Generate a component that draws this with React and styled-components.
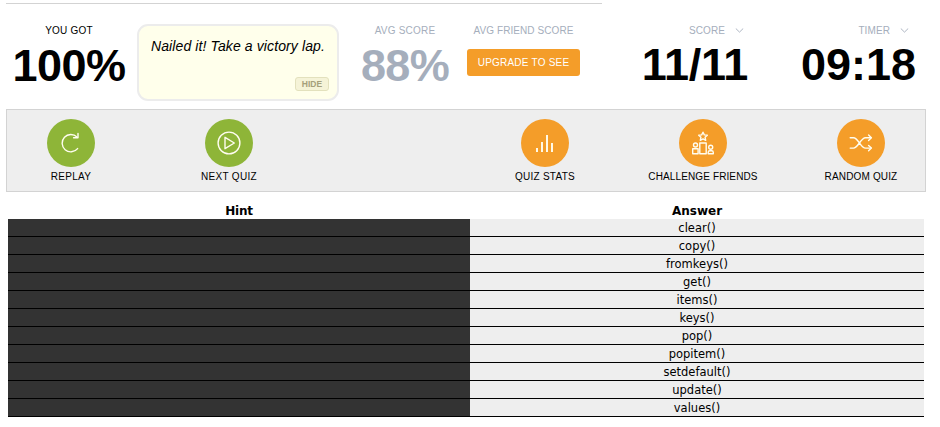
import React from "react";
import styled, { createGlobalStyle } from "styled-components";

const GlobalStyle = createGlobalStyle`
  * { box-sizing: border-box; }
  body {
    margin: 0;
    background: #fff;
    color: #000;
    font-family: "Liberation Sans", Arial, sans-serif;
  }
`;

const Page = styled.main`
  width: 940px;
  height: 427px;
  padding: 3px 14px 0 6px;
  overflow: hidden;
`;

const TopRule = styled.div`
  width: 596px;
  height: 1px;
  background: #d3d3d3;
`;

const ScoreBar = styled.header`
  display: flex;
  height: 105px;
  padding-top: 20px;
`;

const Stat = styled.section`
  display: flex;
  flex-direction: column;
  align-items: ${(p) => p.$align || "center"};
  width: ${(p) => p.$width}px;
  margin-left: ${(p) => p.$gap || 0}px;
  color: ${(p) => (p.$muted ? "#a5aebc" : "#000")};
`;

const StatLabel = styled.div`
  display: flex;
  align-items: center;
  height: 13px;
  font-size: 10px;
  line-height: 13px;
  letter-spacing: ${(p) => p.$spacing || 0}px;
  white-space: nowrap;
  color: ${(p) => p.$color || "inherit"};
  padding-right: ${(p) => p.$inset || 0}px;
  svg { margin-left: 10px; }
`;

const StatValue = styled.div`
  margin-top: ${(p) => p.$top}px;
  font-size: 45px;
  font-weight: bold;
  line-height: 52px;
  letter-spacing: ${(p) => p.$spacing || 0}px;
  white-space: nowrap;
`;

const Note = styled.aside`
  display: flex;
  flex-direction: column;
  justify-content: space-between;
  align-items: flex-end;
  width: 202px;
  height: 77px;
  margin-left: 5px;
  padding: 11px 8px 8px 12px;
  border: 2px solid #ececec;
  border-radius: 11px;
  background: #ffffeb;
`;

const NoteText = styled.p`
  width: 100%;
  margin: 0;
  font-size: 14px;
  line-height: 18px;
  font-style: italic;
  letter-spacing: 0.11px;
  white-space: nowrap;
`;

const HideButton = styled.button`
  width: 34px;
  height: 14px;
  padding: 0;
  border: 1px solid #e3e1bd;
  border-radius: 3px;
  background: #f5f3d7;
  color: #a5a07b;
  font: bold 8.5px/12px "Liberation Sans", Arial, sans-serif;
`;

const UpgradeButton = styled.button`
  width: 113px;
  height: 27px;
  margin-top: 12px;
  padding: 0;
  border: 0;
  border-radius: 3px;
  background: #f49d29;
  color: #fff;
  font: 10px/27px "Liberation Sans", Arial, sans-serif;
  letter-spacing: 0.22px;
  white-space: nowrap;
`;

const ActionBar = styled.nav`
  display: grid;
  grid-template-columns: repeat(6, 128px);
  column-gap: 30px;
  width: 920px;
  height: 83px;
  padding-top: 9px;
  border: 1px solid #d3d3d3;
  background: #eee;
`;

const Action = styled.div`
  display: flex;
  flex-direction: column;
  align-items: center;
  grid-column: ${(p) => p.$column};
`;

const ActionIcon = styled.span`
  display: block;
  width: 48px;
  height: 48px;
  border-radius: 50%;
  background: ${(p) => (p.$tone === "green" ? "#8eb538" : "#f49d29")};
  svg {
    display: block;
    fill: none;
    stroke: #fffdf0;
    stroke-width: 1.4;
    stroke-linecap: round;
    stroke-linejoin: round;
  }
`;

const ActionLabel = styled.span`
  margin-top: 3px;
  font-size: 10px;
  line-height: 13px;
  letter-spacing: ${(p) => p.$spacing || 0}px;
  white-space: nowrap;
`;

const QuizTable = styled.table`
  width: 916px;
  margin: 8px 0 0 2px;
  border-collapse: separate;
  border-spacing: 0;
  table-layout: fixed;
  font-family: "DejaVu Sans", Verdana, sans-serif;
  text-align: center;
`;

const HeadCell = styled.th`
  width: ${(p) => p.$width}px;
  height: 19px;
  padding: 3px 0 0;
  font-size: 12px;
  line-height: 16px;
  letter-spacing: ${(p) => p.$spacing || 0}px;
`;

const HintCell = styled.td`
  height: 18px;
  padding: 0;
  border-bottom: 1px solid #000;
  background: #333;
`;

const AnswerCell = styled.td`
  height: 18px;
  padding: 2px 0 0;
  border-bottom: 1px solid #000;
  background: #eee;
  font-size: 11.5px;
  line-height: 15px;
`;

const Chevron = () => (
  <svg width="9" height="6" viewBox="0 0 9 6" fill="none" stroke="#a5aebc" strokeWidth="0.9">
    <path d="M0.8 0.5 4.5 4.1 8.2 0.5" />
  </svg>
);

const icons = {
  replay: (
    <>
      <path d="M30.6 29.6a8.7 8.7 0 1 1-.6-11.6" />
      <path d="M31 14.4v4.4h-4.4" />
    </>
  ),
  next: (
    <>
      <circle cx="24" cy="24" r="10.9" />
      <path d="M20 18.3v11.4l9.3-5.7z" />
    </>
  ),
  stats: (
    <path
      d="M16 29v4M21 23v10M26 16v17M31 24v9"
      strokeWidth="1.9"
      strokeLinecap="butt"
    />
  ),
  challenge: (
    <>
      <path d="m24 13.2 1.3 2.7 3 .4-2.2 2 .6 3-2.7-1.4-2.7 1.4.6-3-2.2-2 3-.4z" />
      <path d="M20.8 24h6.4v10.7h-6.4z" />
      <circle cx="16.5" cy="26" r="2" />
      <path d="M13.7 29.8h5.4v4.9h-5.4z" />
      <circle cx="31.7" cy="28.2" r="2" />
      <path d="M29.2 34.7v-1.2c0-1 .8-1.7 1.7-1.7h1.7c1 0 1.7.7 1.7 1.7v1.2z" />
    </>
  ),
  random: (
    <>
      <path d="M13.2 18.7h3.3c4.7 0 7.1 10.4 12 10.4h5.3M13.2 29.1h3.3c4.7 0 7.1-10.4 12-10.4h5.3" />
      <path d="m31.6 16 2.8 2.7-2.8 2.7M31.6 26.4l2.8 2.7-2.8 2.7" />
    </>
  ),
};

const actions = [
  { icon: "replay", label: "REPLAY", tone: "green", column: 1, spacing: 0.3 },
  { icon: "next", label: "NEXT QUIZ", tone: "green", column: 2, spacing: 0.3 },
  { icon: "stats", label: "QUIZ STATS", tone: "orange", column: 4, spacing: 0.25 },
  { icon: "challenge", label: "CHALLENGE FRIENDS", tone: "orange", column: 5, spacing: 0.12 },
  { icon: "random", label: "RANDOM QUIZ", tone: "orange", column: 6, spacing: 0.15 },
];

const answers = [
  "clear()", "copy()", "fromkeys()", "get()", "items()", "keys()",
  "pop()", "popitem()", "setdefault()", "update()", "values()",
];

export default function App() {
  return (
    <>
      <GlobalStyle />
      <Page>
        <TopRule />
        <ScoreBar>
          <Stat $width={126}>
            <StatLabel $spacing={0.2}>YOU GOT</StatLabel>
            <StatValue $top={3} $spacing={-0.5}>100%</StatValue>
          </Stat>
          <Note>
            <NoteText>Nailed it! Take a victory lap.</NoteText>
            <HideButton>HIDE</HideButton>
          </Note>
          <Stat $width={90} $gap={21} $muted>
            <StatLabel $spacing={0.2}>AVG SCORE</StatLabel>
            <StatValue $top={3} $spacing={-0.7}>88%</StatValue>
          </Stat>
          <Stat $width={113} $gap={17} $muted>
            <StatLabel $spacing={0.07}>AVG FRIEND SCORE</StatLabel>
            <UpgradeButton>UPGRADE TO SEE</UpgradeButton>
          </Stat>
          <Stat $width={120} $gap={48} $align="flex-end">
            <StatLabel $color="#a5aebc" $inset={4} $spacing={0.1}>SCORE<Chevron /></StatLabel>
            <StatValue $top={2} $spacing={-0.3}>11/11</StatValue>
          </Stat>
          <Stat $width={129} $gap={39} $align="flex-end">
            <StatLabel $color="#a5aebc" $inset={7} $spacing={0.1}>TIMER<Chevron /></StatLabel>
            <StatValue $top={2}>09:18</StatValue>
          </Stat>
        </ScoreBar>
        <ActionBar>
          {actions.map((a) => (
            <Action key={a.label} $column={a.column}>
              <ActionIcon $tone={a.tone}>
                <svg width="48" height="48" viewBox="0 0 48 48">{icons[a.icon]}</svg>
              </ActionIcon>
              <ActionLabel $spacing={a.spacing}>{a.label}</ActionLabel>
            </Action>
          ))}
        </ActionBar>
        <QuizTable>
          <thead>
            <tr>
              <HeadCell $width={462} $spacing={-0.2}>Hint</HeadCell>
              <HeadCell $width={454}>Answer</HeadCell>
            </tr>
          </thead>
          <tbody>
            {answers.map((answer) => (
              <tr key={answer}>
                <HintCell />
                <AnswerCell>{answer}</AnswerCell>
              </tr>
            ))}
          </tbody>
        </QuizTable>
      </Page>
    </>
  );
}
